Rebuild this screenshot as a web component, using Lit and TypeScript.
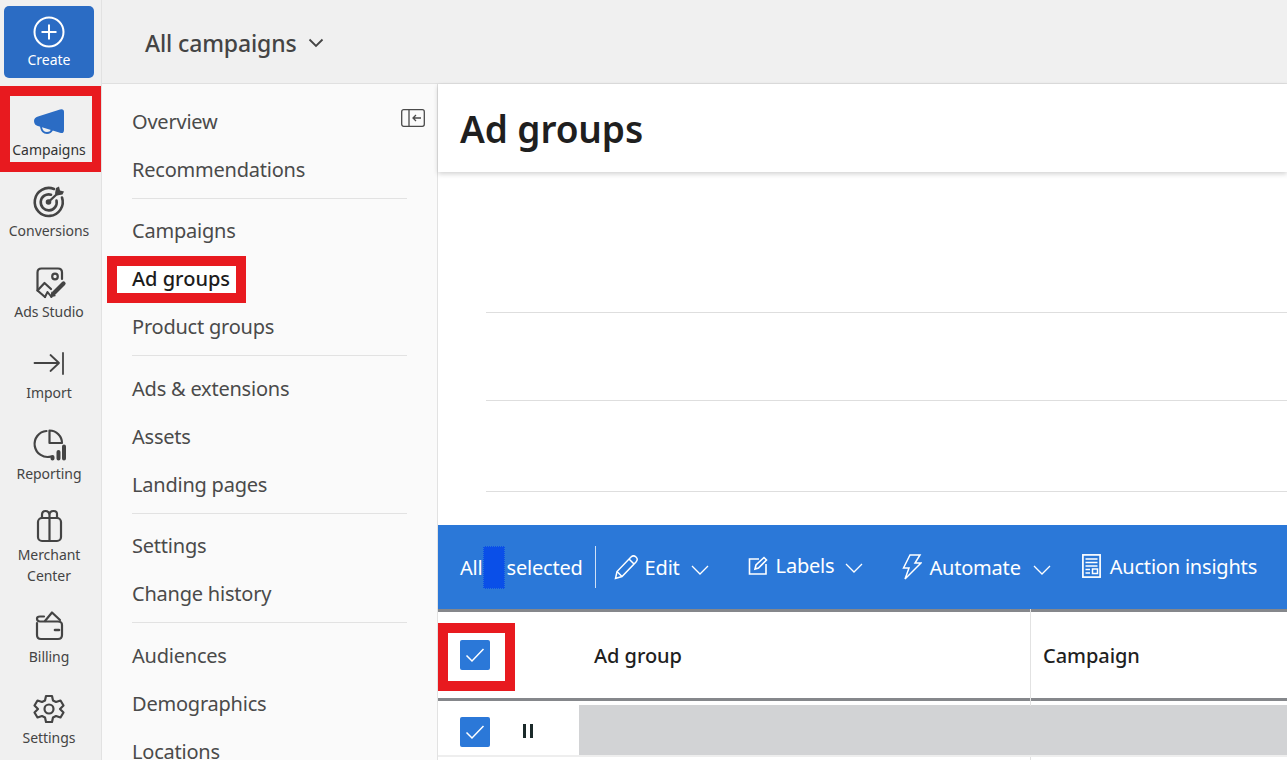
import { LitElement, html, css, svg } from "lit";
import { customElement } from "lit/decorators.js";

const ic = (body: unknown, dy = 0) =>
  html`<svg class="ri" width="32" height="32" viewBox="0 0 32 32" fill="none" stroke="#444" stroke-width="2.2" stroke-linecap="round" stroke-linejoin="round"><g transform="translate(0 ${dy})">${body}</g></svg>`;

const railIcons: Record<string, unknown> = {
  megaphone: svg`<path fill="#2b6cc4" stroke="none" d="M5 10.500 27 3.400Q31 2.400 31 6V24Q31 28 27 26.800L6.500 20.500Q1 19.500 1 15Q1 11.500 5 10.500Z"/><path stroke="#2b6cc4" stroke-width="1.800" d="M8 21Q9 27 14 27Q17.500 27 19 24"/>`,
  target: svg`<path stroke-width="2.600" d="M21 3.500A14 14 0 1 0 29 12"/><path stroke-width="2.600" d="M18 9.200A8 8 0 1 0 23.500 15"/><circle cx="15.500" cy="16.500" r="2.800" fill="#444" stroke="none"/><path stroke-width="2.400" d="M16 16 25 7.500"/><path fill="#444" stroke="none" d="M22 8 23 2.500 26 1 27 5 31 6 29.500 9 24 10Z"/>`,
  studio: svg`<path d="M12 30 4.500 23.500V5.500Q4.500 1.500 8.500 1.500H25Q29 1.500 29 5.500V12"/><path d="M4.500 23.500 11.500 16 18 22"/><circle cx="22" cy="9.500" r="2.800"/><path d="M12 30 14.500 25 18.500 30" stroke-width="2"/><path stroke-width="4.200" d="M21 26 30.500 16.500"/><path fill="#444" stroke="none" d="M18.500 24.500 23 29 17 30.500Z"/>`,
  importer: svg`<path d="M1.500 14H26M17.500 6 26 14 17.500 22M30 4V25" stroke-width="1.800"/>`,
  report: svg`<path d="M13.500 3A13 13 0 1 0 18 28.500" stroke-width="2.200"/><path d="M16.500 2.500V15H29A12.500 12.500 0 0 0 16.500 2.500Z" stroke-width="2.200"/><path stroke-width="4" d="M19.500 30.500V29M25.500 30.500V24M31 30.500V18.500"/>`,
  gift: svg`<rect x="5" y="8" width="23" height="23" rx="4"/><path d="M16.500 8V31"/><path d="M9 8V5Q9 1 12.500 1T16.500 5V8M16.500 5Q16.500 1 20.500 1T24 5V8"/>`,
  wallet: svg`<path d="M4 14V26Q4 30 8 30H25Q29 30 29 26V16Q29 12.500 25 12.500H7Q4 12.500 4 9.500Q4 7.500 7 7.500H11"/><path d="M12 12 19 3.500 27 11" /><path d="M22 21H26" stroke-width="2.600"/>`,
  gear: svg`<circle cx="16" cy="16" r="4.500"/><path d="M13 3H19L20 7.500 23 9 27.500 7.500 30.500 12.500 27 16 30.500 19.500 27.500 24.500 23 23 20 24.500 19 29H13L12 24.500 9 23 4.500 24.500 1.500 19.500 5 16 1.500 12.500 4.500 7.500 9 9 12 7.500Z"/>`,
};

const rail = [
  { icon: "megaphone", label: ["Campaigns"], marked: true, dy: 0 },
  { icon: "target", label: ["Conversions"], dy: -1.5 },
  { icon: "studio", label: ["Ads Studio"], dy: -1 },
  { icon: "importer", label: ["Import"], dy: 0 },
  { icon: "report", label: ["Reporting"], dy: -2 },
  { icon: "gift", label: ["Merchant", "Center"], dy: -1 },
  { icon: "wallet", label: ["Billing"], dy: -4 },
  { icon: "gear", label: ["Settings"], dy: -1 },
];

const navGroups = [
  ["Overview", "Recommendations"],
  ["Campaigns", "Ad groups", "Product groups"],
  ["Ads & extensions", "Assets", "Landing pages"],
  ["Settings", "Change history"],
  ["Audiences", "Demographics", "Locations"],
];

const chevron = html`<svg class="chev" width="18" height="10" viewBox="0 0 18 10" fill="none" stroke="#fff" stroke-width="1.300"><path d="M1 1 9 9 17 1"/></svg>`;
const check = html`<span class="check"><svg width="20" height="16" viewBox="0 0 20 16" fill="none" stroke="#fff" stroke-width="1.500"><path d="M1.500 8.500 7 14 18.500 2"/></svg></span>`;

@customElement("app-root")
export class AppRoot extends LitElement {
  static styles = css`
    :host { display: block; width: 1287px; height: 760px; overflow: hidden; position: relative; background: #fff;
      font-family: "Noto Sans", "Open Sans", sans-serif; color: #444; }
    .shell { display: flex; height: 760px; }
    .rail { width: 102px; box-sizing: border-box; padding-right: 3px; flex: none; background: #f0f0f0; border-right: 1px solid #e2e2e2; display: flex; flex-direction: column; align-items: center; }
    .create { width: 90px; height: 72px; margin-top: 6px; margin-bottom: 4px; background: #2b6cc4; border-radius: 5px; color: #fff; display: flex; flex-direction: column; align-items: center; padding-top: 10px; box-sizing: border-box; font-size: 14px; line-height: 20px; gap: 2px; }
    .rail-item { position: relative; width: 98px; height: 81px; flex: none; display: flex; flex-direction: column; align-items: center; padding-top: 24px; box-sizing: border-box; font-size: 14px; line-height: 21px; color: #444; letter-spacing: -0.05px; white-space: nowrap; }
    .rail-item.two { height: 102px; }
    .ri { flex: none; margin-bottom: 1px; overflow: visible; }
    .rail-item.first { color: #333; }
    .rail-item span { display: block; text-align: center; }
    .body { flex: 1; display: flex; flex-direction: column; min-width: 0; }
    .top { height: 84px; box-sizing: border-box; flex: none; background: #f0f0f0; border-bottom: 1px solid #e0e0e0; display: flex; align-items: center; padding-left: 43px; padding-top: 2px; gap: 11px; font-size: 23px; font-weight: 500; color: #444; letter-spacing: -0.12px; }
    .under { flex: 1; display: flex; min-height: 0; }
    .nav { width: 336px; flex: none; background: #fafafa; border-right: 1px solid #e2e2e2; padding: 13.75px 30px 0 30px; box-sizing: border-box; position: relative; font-size: 20px; letter-spacing: -0.22px; color: #4a4a4a; overflow: hidden; }
    .nav-item { height: 48px; line-height: 48px; position: relative; white-space: nowrap; }
    .nav-item.on { color: #1c1c1c; }
    .nav-group { border-bottom: 1px solid #e2e2e2; padding-bottom: 4px; margin-bottom: 8.5px; }
    .nav-group:last-child { border-bottom: none; }
    .collapse { position: absolute; top: 25px; right: 12px; }
    .main { flex: 1; min-width: 0; display: flex; flex-direction: column; }
    .title { height: 88px; flex: none; box-sizing: border-box; padding-left: 22px; display: flex; align-items: center; font-size: 37px; font-weight: 600; color: #1f1f1f; box-shadow: 0 2px 5px rgba(0,0,0,.18); position: relative; letter-spacing: -0.1px; }
    .chart { height: 353px; flex: none; box-sizing: border-box; padding: 140px 0 0 48px; display: flex; flex-direction: column; }
    .grid { border-top: 1px solid #dedede; height: 88px; flex: none; box-sizing: border-box; }
    .grid.b { height: 91px; }
    .bar { height: 84px; flex: none; background: #2b78d8; color: #fff; display: flex; align-items: center; font-size: 20px; padding-left: 22px; letter-spacing: -0.2px; white-space: nowrap; }
    .redact { display: inline-block; width: 22px; height: 43px; background: #0a4fe8; outline: 1px dotted #2b78d8; outline-offset: -1px; margin: 0 2px 0 0; vertical-align: middle; }
    .sel { display: flex; align-items: center; height: 43px; gap: 0; }
    .sep { width: 1px; height: 42px; background: #cfe0f6; margin: 0 18px 0 12px; }
    .act { display: flex; align-items: center; }
    .act .lbl { margin-left: 6px; }
    .chev { margin-left: 11px; margin-top: 5px; }
    .act.labels { margin-left: 39px; margin-top: -4px; }
    .act.labels .lbl { margin-left: 8px; }
    .act.automate { margin-left: 39px; }
    .act.automate .lbl { margin-left: 7px; }
    .act.automate .chev { margin-left: 12px; }
    .act.auction { margin-left: 31px; margin-top: -2px; }
    .act.auction .lbl { margin-left: 9px; }
    .table { flex: 1; min-height: 0; }
    .head { height: 92px; box-sizing: border-box; border-top: 3px solid #85878b; border-bottom: 3px solid #85878b; display: grid; grid-template-columns: 156px 436px 1fr; align-items: center; font-size: 20px; font-weight: 500; color: #1f1f1f; position: relative; letter-spacing: -0.05px; }
    .head > div { height: 100%; display: flex; align-items: center; box-sizing: border-box; }
    .c0 { padding-left: 22px; position: relative; }
    .c2 { padding-left: 13px; position: relative; }
    .c2::before { content: ""; position: absolute; left: 0; top: -3px; bottom: -8px; width: 1px; background: #e2e2e2; }
    .row { height: 56px; box-sizing: border-box; border-bottom: 2px solid #eee; display: grid; grid-template-columns: 141px 1fr; }
    .row .cell { display: flex; align-items: center; padding-left: 22px; gap: 33px; box-sizing: border-box; padding-top: 7px; }
    .gray { background: #d2d3d5; margin-top: 4px; }
    .pause { width: 10px; height: 14px; box-sizing: border-box; border-left: 3px solid #1b2a2a; border-right: 3px solid #1b2a2a; margin-top: -2px; }
    .tail { height: 10px; margin-left: 592px; border-left: 1px solid #e2e2e2; }
    .check { width: 30px; height: 30px; flex: none; border-radius: 2px; background: #2b78d8; display: flex; align-items: center; justify-content: center; }
    .mark { position: absolute; border: 10px solid #e81a1f; box-sizing: border-box; pointer-events: none; }
    .m-rail { left: 0; top: 4px; width: 101px; height: 86px; border-right-width: 9px; }
    .m-nav { left: -25px; top: 1px; width: 139px; height: 47px; background: #fff; }
    .nav-item.on b { position: relative; font-weight: 500; letter-spacing: 0; }
    .m-check { left: 0; top: 11px; width: 77px; height: 68px; }
  `;

  render() {
    return html`<div class="shell">
      <aside class="rail">
        <div class="create">
          <svg width="32" height="32" viewBox="0 0 32 32" fill="none" stroke="#fff" stroke-width="2"><circle cx="16" cy="16" r="14.500"/><path d="M16 8.500V23.500M8.500 16H23.500"/></svg>
          Create
        </div>
        ${rail.map((r, i) => html`<div class="rail-item ${i === 0 ? "first" : ""} ${r.label.length > 1 ? "two" : ""}">
          ${r.marked ? html`<div class="mark m-rail"></div>` : ""}
          ${ic(railIcons[r.icon], r.dy)}
          ${r.label.map((l) => html`<span>${l}</span>`)}
        </div>`)}
      </aside>
      <div class="body">
        <header class="top">All campaigns
          <svg width="16" height="10" viewBox="0 0 16 10" fill="none" stroke="#444" stroke-width="1.800"><path d="M1.500 1.500 8 8 14.500 1.500"/></svg>
        </header>
        <div class="under">
          <nav class="nav">
            <svg class="collapse" width="24" height="18" viewBox="0 0 24 18" fill="none" stroke="#4a4a4a" stroke-width="1.300"><rect x=".7" y=".7" width="22.600" height="16.600" rx="2"/><path d="M8 1V17"/><path d="M20 9H12M15 6 12 9 15 12"/></svg>
            ${navGroups.map((g) => html`<div class="nav-group">
              ${g.map((n) => n === "Ad groups"
                ? html`<div class="nav-item on"><div class="mark m-nav"></div><b>${n}</b></div>`
                : html`<div class="nav-item">${n}</div>`)}
            </div>`)}
          </nav>
          <main class="main">
            <div class="title">Ad groups</div>
            <div class="chart"><div class="grid"></div><div class="grid b"></div><div class="grid"></div></div>
            <div class="bar">
              <div class="sel">All<span class="redact"></span>selected</div>
              <div class="sep"></div>
              <div class="act">
                <svg width="25" height="26" viewBox="0 0 25 26" fill="none" stroke="#fff" stroke-width="1.500"><path d="M1.500 24.500 3 17.500 17 3Q19.500 .8 22 3T22 8L8 22.500Z"/><path d="M15 5 20 10M3 17.500 8 22.500"/></svg>
                <span class="lbl">Edit</span>${chevron}
              </div>
              <div class="act labels">
                <svg width="20" height="20" viewBox="0 0 20 20" fill="none" stroke="#fff" stroke-width="1.600"><path d="M11 4H1.500V19H18V9"/><path d="M7 14 8 10 16 2.500 18.500 5 10.500 13Z"/></svg>
                <span class="lbl">Labels</span>${chevron}
              </div>
              <div class="act automate">
                <svg width="20" height="26" viewBox="0 0 20 26" fill="none" stroke="#fff" stroke-width="1.500"><path d="M8 1H18L13 9H19L3 25 7 14H1.500Z"/></svg>
                <span class="lbl">Automate</span>${chevron}
              </div>
              <div class="act auction">
                <svg width="19" height="24" viewBox="0 0 19 24" fill="none" stroke="#fff" stroke-width="1.700"><rect x=".9" y=".9" width="17.200" height="22.200"/><path d="M3.500 5H15.500M3.500 8.500H15.500M3.500 12H15.500M3.500 15.500H8M3.500 19H8" stroke-width="1.500"/><rect x="10.500" y="15" width="5" height="4.500" stroke-width="1.500"/></svg>
                <span class="lbl">Auction insights</span>
              </div>
            </div>
            <div class="table">
              <div class="head">
                <div class="c0"><div class="mark m-check"></div>${check}</div>
                <div>Ad group</div>
                <div class="c2">Campaign</div>
              </div>
              <div class="row">
                <div class="cell">${check}<span class="pause"></span></div>
                <div class="gray"></div>
              </div>
              <div class="tail"></div>
            </div>
          </main>
        </div>
      </div>
    </div>`;
  }
}
